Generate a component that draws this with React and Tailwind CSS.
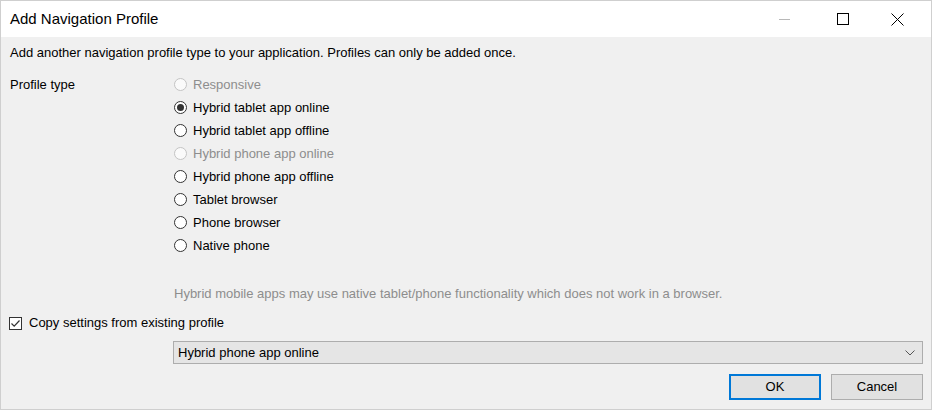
const options = [
  { label: "Responsive", disabled: true },
  { label: "Hybrid tablet app online", checked: true },
  { label: "Hybrid tablet app offline" },
  { label: "Hybrid phone app online", disabled: true },
  { label: "Hybrid phone app offline" },
  { label: "Tablet browser" },
  { label: "Phone browser" },
  { label: "Native phone" },
];

function Radio({ label, checked, disabled }) {
  return (
    <div className="flex items-center h-[23px]">
      <span
        className={`w-[13px] h-[13px] rounded-full border flex items-center justify-center shrink-0 ${
          disabled ? "border-[#c4c4c4] bg-[#fafafa]" : "border-[#333333] bg-white"
        }`}
      >
        {checked && <span className="w-[7px] h-[7px] rounded-full bg-[#333333]" />}
      </span>
      <span className={`ml-[6px] ${disabled ? "text-[#8d8d8d]" : "text-black"}`}>{label}</span>
    </div>
  );
}

export default function App() {
  return (
    <div
      className="w-[932px] h-[410px] border border-[#cfcfcf] bg-[#f0f0f0] flex flex-col text-[13px] leading-[16px] text-black"
      style={{ fontFamily: "'Liberation Sans', Arial, sans-serif" }}
    >
      {/* Title bar */}
      <div className="h-[36px] bg-white flex items-center shrink-0">
        <span className="pl-[9px] text-[15px] flex-1">Add Navigation Profile</span>
        <div className="flex h-full pr-[7px]">
          <div className="w-[54px] flex items-center justify-center">
            <span className="w-[11px] h-px bg-[#b8b8b8] mr-[10px]" />
          </div>
          <div className="w-[54px] flex items-center justify-center">
            <span className="w-[12px] h-[12px] border border-black" />
          </div>
          <div className="w-[54px] flex items-center justify-center">
            <svg width="13" height="13" viewBox="0 0 13 13">
              <path d="M0.5 0.5 L12.5 12.5 M12.5 0.5 L0.5 12.5" stroke="#000" strokeWidth="1" fill="none" />
            </svg>
          </div>
        </div>
      </div>

      {/* Body */}
      <div className="flex flex-col px-[9px]">
        <p className="pt-[8px]">Add another navigation profile type to your application. Profiles can only be added once.</p>

        <div className="flex mt-[12px]">
          <div className="w-[164px] h-[23px] flex items-center">Profile type</div>
          <div className="flex flex-col">
            {options.map((o) => (
              <Radio key={o.label} {...o} />
            ))}
          </div>
        </div>

        <p className="ml-[164px] mt-[29px] text-[#8d8d8d]">
          Hybrid mobile apps may use native tablet/phone functionality which does not work in a browser.
        </p>

        <div className="flex items-center mt-[13px] h-[16px] -ml-[1px]">
          <span className="w-[13px] h-[13px] border border-[#333333] bg-white flex items-center justify-center">
            <svg width="11" height="11" viewBox="0 0 11 11">
              <path d="M1.5 5.5 L4.2 8.2 L9.5 2.5" stroke="#333" strokeWidth="1.2" fill="none" />
            </svg>
          </span>
          <span className="ml-[7px]">Copy settings from existing profile</span>
        </div>

        <div className="ml-[163px] mr-[-1px] mt-[10px] h-[23px] border border-[#adadad] bg-[#e5e5e5] flex items-center pl-[4px] pr-[7px]">
          <span className="flex-1">Hybrid phone app online</span>
          <svg width="10" height="6" viewBox="0 0 10 6">
            <path d="M0.5 0.5 L5 5 L9.5 0.5" stroke="#555" strokeWidth="1" fill="none" />
          </svg>
        </div>

        <div className="flex justify-end mt-[10px] gap-[10px] -mr-[1px]">
          <button className="w-[92px] h-[26px] border-2 border-[#0078d7] bg-[#e1e1e1] text-[13px]">OK</button>
          <button className="w-[92px] h-[26px] border border-[#adadad] bg-[#e1e1e1] text-[13px]">Cancel</button>
        </div>
      </div>
    </div>
  );
}
